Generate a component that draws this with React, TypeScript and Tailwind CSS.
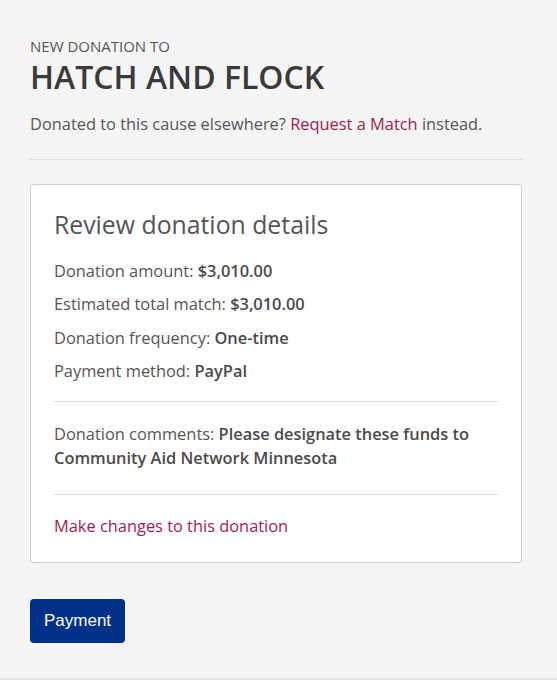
export default function App() {
  const rows = [
    { label: 'Donation amount:', value: '$3,010.00' },
    { label: 'Estimated total match:', value: '$3,010.00' },
    { label: 'Donation frequency:', value: 'One-time' },
    { label: 'Payment method:', value: 'PayPal' },
  ]

  return (
    <div
      className="min-h-[680px] bg-[#f5f5f5] px-[30px] pt-[37px] text-[#555] border-b-2 border-[#e4e4e4]"
      style={{ fontFamily: '"Open Sans", sans-serif' }}
    >
      <div className="w-[492px]">
        <p className="text-[15px] leading-[18px] uppercase text-[#555]">New donation to</p>
        <h1 className="mt-[2px] text-[32px] leading-[40px] font-semibold text-[#3a3a3a] uppercase">
          Hatch and Flock
        </h1>
        <p className="mt-[15px] text-[16.4px] leading-[24px]">
          Donated to this cause elsewhere?{' '}
          <a href="#" className="text-[#a51c4f]">Request a Match</a> instead.
        </p>
        <div className="mt-[23px] border-t border-[#dedede]" />

        {/* review card */}
        <div className="mt-[24px] bg-white border border-[#cfcfcf] rounded-[4px] px-[23px] pt-[21px] pb-[24px]">
          <h2 className="text-[24.8px] leading-[36px] font-normal text-[#555]">Review donation details</h2>
          <div className="mt-[17px] flex flex-col gap-[9.3px]">
            {rows.map((r) => (
              <p key={r.label} className="text-[16.4px] leading-[24px]">
                {r.label} <span className="font-semibold text-[#4a4a4a]">{r.value}</span>
              </p>
            ))}
          </div>
          <div className="mt-[18px] border-t border-[#dedede]" />
          <p className="mt-[20px] text-[16.4px] leading-[24px]">
            Donation comments:{' '}
            <span className="font-semibold text-[#4a4a4a]">
              Please designate these funds to Community Aid Network Minnesota
            </span>
          </p>
          <div className="mt-[24px] border-t border-[#dedede]" />
          <a href="#" className="mt-[19px] block text-[16.4px] leading-[24px] text-[#a51c4f]">
            Make changes to this donation
          </a>
        </div>

        <button
          className="mt-[36px] h-[44px] px-[14px] rounded-[4px] bg-[#003087] text-white text-[17px]"
          style={{ fontFamily: '"Liberation Sans", Arial, sans-serif' }}
        >
          Payment
        </button>
      </div>
    </div>
  )
}
